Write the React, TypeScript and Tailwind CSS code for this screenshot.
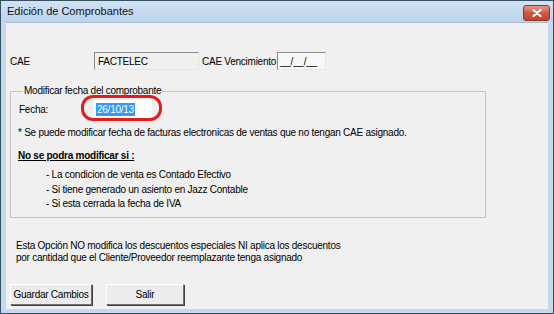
export default function App() {
  const ui = { fontFamily: '"Liberation Sans", Arial, sans-serif' };

  return (
    <div
      className="w-[554px] h-[314px] flex flex-col bg-[#c4d8ee] border border-[#34515f] text-[10px] tracking-[-0.25px] text-black overflow-hidden"
      style={ui}
    >
      {/* title bar */}
      <div className="h-[21px] flex items-center justify-between pl-[6px] pr-[3px] bg-gradient-to-b from-[#d2e2f3] to-[#bcd3ec]">
        <span className="text-[11px] tracking-normal text-[#111]">Edición de Comprobantes</span>
        <div className="w-[27px] h-[16px] mt-[3px] rounded-[3px] border border-[#8a3a2c] bg-gradient-to-b from-[#e5998a] via-[#d05a44] to-[#c4402c] flex items-center justify-center">
          <svg width="10" height="8" viewBox="0 0 10 8">
            <path d="M1.5 1 L8.5 7 M8.5 1 L1.5 7" stroke="#fff" strokeWidth="2.2" strokeLinecap="round" />
          </svg>
        </div>
      </div>

      {/* client area */}
      <div className="flex-1 mx-[5px] mb-[4px] bg-[#f0f0f0] border-t border-[#a9bdd2] px-[4px] flex flex-col">
        {/* CAE row */}
        <div className="mt-[29px] h-[18px] flex items-center whitespace-nowrap">
          <span className="w-[84px]">CAE</span>
          <div className="w-[105px] h-[18px] border-t border-l border-[#8c8c8c] border-b border-r border-b-[#e6e6e6] border-r-[#e6e6e6] bg-[#f0f0f0] flex items-center pl-[3px]">
            FACTELEC
          </div>
          <span className="ml-[3px] w-[75px]">CAE Vencimiento</span>
          <div className="w-[49px] h-[18px] border-t border-l border-[#8c8c8c] border-b border-r border-b-[#e6e6e6] border-r-[#e6e6e6] bg-[#f7f7f7] flex items-center pl-[2px]">
            __/__/__
          </div>
        </div>

        {/* group box */}
        <fieldset className="mt-[14px] w-[476px] h-[134px] border border-[#c4c4c4] pl-[7px] pr-[6px] flex flex-col">
          <legend className="ml-[5px] px-[1px] leading-[14px]">Modificar fecha del comprobante</legend>
          <div className="h-[18px] flex items-center mt-[2px]">
            <span className="w-[76px] pl-[1px]">Fecha:</span>
            <div className="relative w-[58px] h-[18px] bg-white flex items-center pl-[2px]">
              <span className="bg-[#3399ff] text-white px-[1px] leading-[13px]">26/10/13</span>
              <div className="absolute left-[-13px] top-[-5px] w-[81px] h-[26px] rounded-[12px] border-[3px] border-[#e21d1d]" />
            </div>
          </div>
          <p className="mt-[8px] leading-[13px]">
            * Se puede modificar fecha de facturas electronicas de ventas que no tengan CAE asignado.
          </p>
          <p className="mt-[10px] leading-[13px] font-bold underline">No se podra modificar si :</p>
          <ul className="mt-[6px] pl-[28px] leading-[14.5px]">
            <li>- La condicion de venta es Contado Efectivo</li>
            <li>- Si tiene generado un asiento en Jazz Contable</li>
            <li>- Si esta cerrada la fecha de IVA</li>
          </ul>
        </fieldset>

        {/* note */}
        <p className="mt-[22px] pl-[6px] leading-[12px]">
          Esta Opción NO modifica los descuentos especiales NI aplica los descuentos
          <br />
          por cantidad que el Cliente/Proveedor reemplazante tenga asignado
        </p>

        {/* buttons */}
        <div className="mt-[20px] flex gap-[14px] whitespace-nowrap">
          <button className="w-[82px] h-[21px] bg-[#ececec] border border-t-white border-l-white border-b-[#6e6e6e] border-r-[#6e6e6e] shadow-[1px_1px_0_#404040]">
            Guardar Cambios
          </button>
          <button className="w-[78px] h-[21px] bg-[#ececec] border border-t-white border-l-white border-b-[#6e6e6e] border-r-[#6e6e6e] shadow-[1px_1px_0_#404040]">
            Salir
          </button>
        </div>
      </div>
    </div>
  );
}
